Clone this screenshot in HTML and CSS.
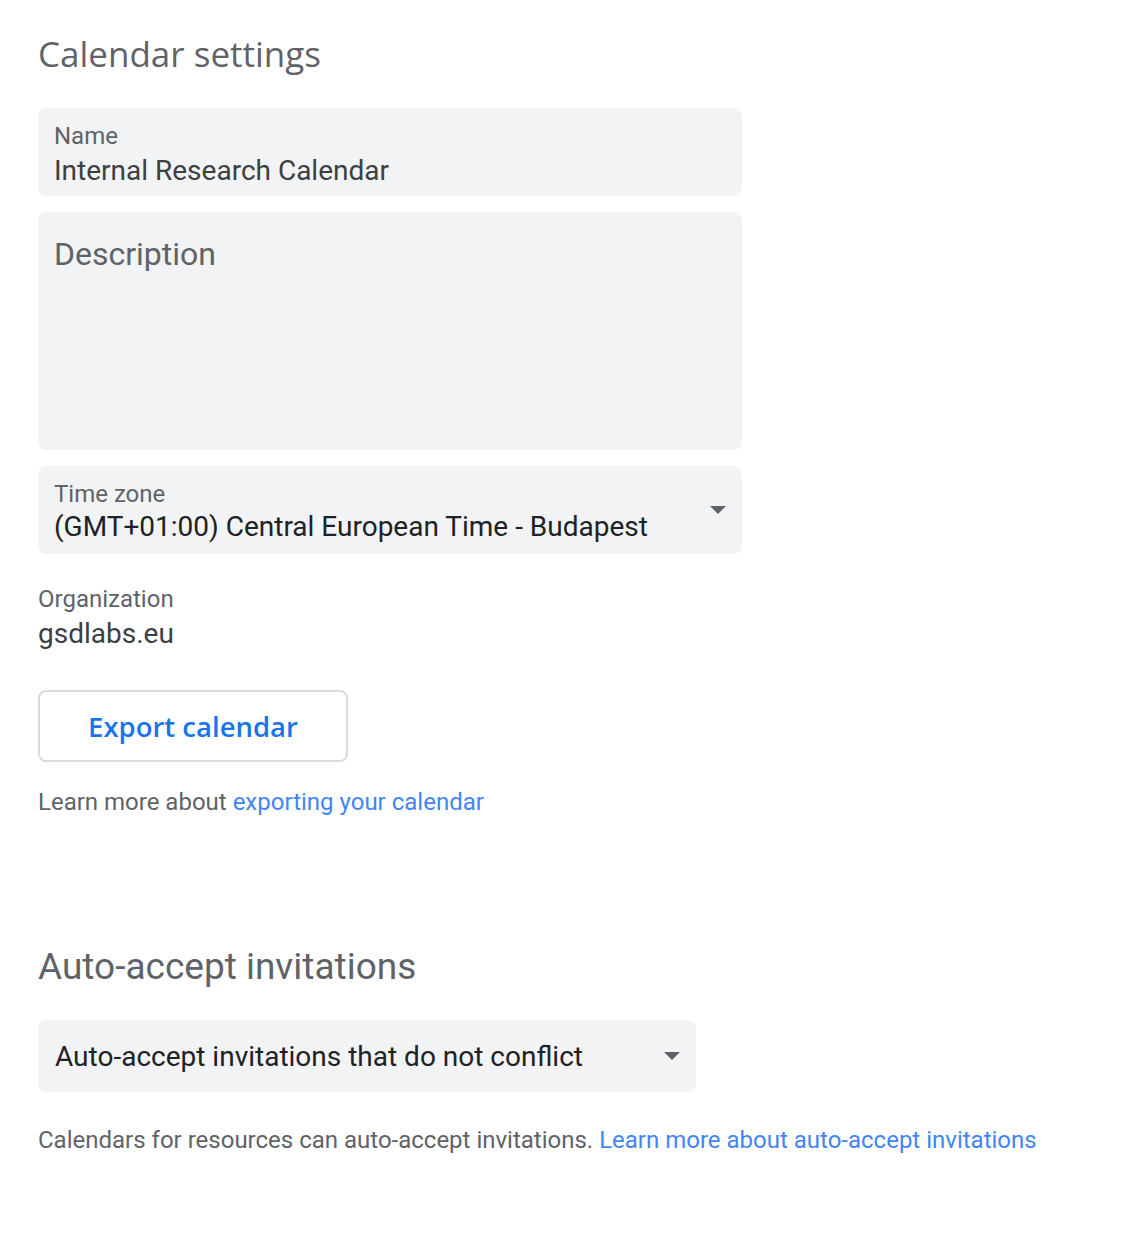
FILE: index.html
```html
<!DOCTYPE html>
<html>
<head>
<meta charset="utf-8">
<link rel="stylesheet" href="styles.css">
</head>
<body>
<main class="page">
  <h1 class="title">Calendar settings</h1>
  <div class="field">
    <div class="label">Name</div>
    <div class="value muted">Internal Research Calendar</div>
  </div>
  <div class="field desc">
    <div class="placeholder">Description</div>
  </div>
  <div class="field select">
    <div class="select-text">
      <div class="label">Time zone</div>
      <div class="value">(GMT+01:00) Central European Time - Budapest</div>
    </div>
    <span class="arrow"></span>
  </div>
  <div class="org">
    <div class="org-label">Organization</div>
    <div class="org-value">gsdlabs.eu</div>
  </div>
  <button class="export">Export calendar</button>
  <p class="help">Learn more about <a href="#">exporting your calendar</a></p>

  <h2 class="section">Auto-accept invitations</h2>
  <div class="dropdown">
    <span class="dropdown-text">Auto-accept invitations that do not conflict</span>
    <span class="arrow"></span>
  </div>
  <p class="help foot">Calendars for resources can auto-accept invitations. <a href="#">Learn more about auto-accept invitations</a></p>
</main>
</body>
</html>
```

FILE: styles.css
```css
html, body {
  margin: 0;
  padding: 0;
  background: #fff;
}
body {
  font-family: Roboto, "Liberation Sans", sans-serif;
  color: #3c4043;
}
.page {
  padding: 24px 38px 0 38px;
  width: 704px;
}
.title {
  font-family: "Open Sans", Roboto, sans-serif;
  font-weight: 400;
  font-size: 35px;
  line-height: 60px;
  color: #5f6368;
  margin: 0 0 24px 0;
}
.field {
  background: #f1f3f4;
  border-radius: 8px;
  height: 88px;
  box-sizing: border-box;
  padding: 14px 16px 0 16px;
  margin-bottom: 16px;
}
.label {
  font-size: 24px;
  line-height: 28px;
  color: #5f6368;
}
.value {
  font-size: 28px;
  line-height: 38px;
  color: #202124;
}
.value.muted {
  color: #3c4043;
  line-height: 42px;
}
.desc {
  height: 238px;
  padding-top: 22px;
}
.placeholder {
  font-size: 32px;
  line-height: 40px;
  color: #5f6368;
}
.select {
  display: flex;
  justify-content: space-between;
  padding: 0 16px;
}
.select-text {
  padding-top: 14px;
}
.select .arrow {
  align-self: center;
}
.arrow {
  width: 0;
  height: 0;
  border-left: 8px solid transparent;
  border-right: 8px solid transparent;
  border-top: 8px solid #5f6368;
}
.org {
  margin-top: 31px;
}
.org-label {
  font-size: 24px;
  line-height: 28px;
  color: #5f6368;
}
.org-value {
  font-size: 28px;
  line-height: 41px;
  color: #3c4043;
}
.export {
  display: block;
  margin-top: 36px;
  width: 310px;
  height: 72px;
  background: #fff;
  border: 2px solid #dadce0;
  border-radius: 8px;
  font-family: "Open Sans", Roboto, sans-serif;
  font-weight: 600;
  font-size: 27.5px;
  color: #1a73e8;
  padding: 0;
}
.help {
  margin: 26px 0 0 0;
  font-size: 24px;
  line-height: 28px;
  color: #5f6368;
}
.help a {
  color: #4285f4;
  text-decoration: none;
}
.section {
  margin: 123px 0 0 0;
  font-weight: 400;
  font-size: 37px;
  line-height: 56px;
  color: #5f6368;
}
.dropdown {
  margin-top: 25px;
  width: 658px;
  height: 72px;
  box-sizing: border-box;
  background: #f1f3f4;
  border-radius: 8px;
  display: flex;
  align-items: center;
  justify-content: space-between;
  padding: 0 16px 0 17px;
}
.dropdown-text {
  font-size: 28px;
  color: #202124;
}
.foot {
  margin-top: 34px;
  white-space: nowrap;
}
```
